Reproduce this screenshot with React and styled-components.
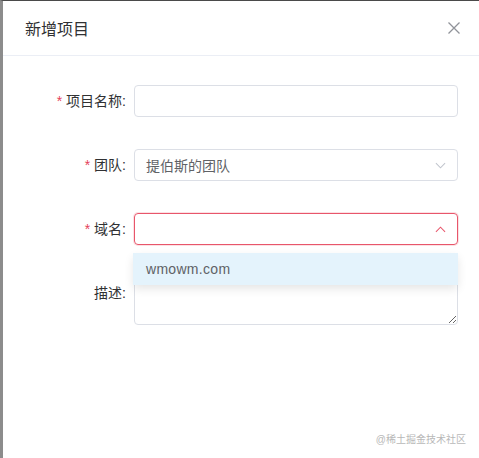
import React from "react";
import styled, { createGlobalStyle } from "styled-components";

const GlobalStyle = createGlobalStyle`
  html, body {
    margin: 0;
    padding: 0;
    background: #fff;
  }
  body {
    font-family: "Liberation Sans", "Noto Sans CJK SC", sans-serif;
    color: #606266;
  }
`;

const Frame = styled.div`
  width: 479px;
  height: 458px;
  box-sizing: border-box;
  border-top: 1px solid #4a4a4a;
  border-left: 3px solid #8c8c8c;
  background: #fff;
  position: relative;
  overflow: hidden;
`;

const Header = styled.div`
  height: 54px;
  display: flex;
  align-items: center;
  justify-content: space-between;
  padding: 0 19px 0 22px;
  border-bottom: 1px solid #ebeef5;
`;

const Title = styled.span`
  font-size: 16px;
  color: #303133;
`;

const Close = styled.svg`
  width: 12px;
  height: 12px;
  display: block;
`;

const Body = styled.div`
  padding: 29px 21px 0 0;
  display: flex;
  flex-direction: column;
  gap: 32px;
`;

const Row = styled.div`
  display: grid;
  grid-template-columns: 131px 1fr;
  align-items: start;
  position: relative;
`;

const Label = styled.label`
  height: 32px;
  line-height: 32px;
  font-size: 14px;
  color: #303133;
  text-align: right;
  padding-right: 8px;
  white-space: nowrap;
`;

const Star = styled.span`
  color: #e5415a;
  margin-right: 4px;
`;

const Field = styled.div`
  height: 32px;
  box-sizing: border-box;
  border: 1px solid ${(p) => (p.$error ? "#e8566b" : "#dcdfe6")};
  box-shadow: ${(p) => (p.$error ? "0 0 0 1px rgba(232, 86, 107, 0.18)" : "none")};
  border-radius: 4px;
  display: flex;
  align-items: center;
  justify-content: space-between;
  padding: 0 11px;
  font-size: 14px;
  color: #606266;
`;

const Chevron = styled.svg`
  width: 11px;
  height: 11px;
  display: block;
`;

const Area = styled.textarea`
  height: 48px;
  box-sizing: border-box;
  border: 1px solid #dcdfe6;
  border-radius: 4px;
  resize: vertical;
  outline: none;
  font: inherit;
  display: block;
  width: 100%;
  margin: 0;
`;

const Menu = styled.ul`
  position: absolute;
  left: 130px;
  right: 0;
  top: 40px;
  margin: 0;
  padding: 0;
  list-style: none;
  background: #fff;
  border-radius: 4px;
  box-shadow: 0 4px 10px rgba(0, 0, 0, 0.1);
  z-index: 2;
`;

const Option = styled.li`
  height: 32px;
  line-height: 32px;
  padding-left: 13px;
  font-size: 14px;
  color: #606266;
  background: #e4f3fc;
  letter-spacing: 0.3px;
`;

const Watermark = styled.div`
  position: absolute;
  right: 13px;
  bottom: 12px;
  font-size: 10px;
  color: #b8b8b8;
`;

const ChevronIcon = ({ up, color }) => (
  <Chevron viewBox="0 0 12 12">
    <path
      d={up ? "M1 8.5 L6 3.5 L11 8.5" : "M1 3.5 L6 8.5 L11 3.5"}
      fill="none"
      stroke={color}
      strokeWidth="1.1"
    />
  </Chevron>
);

export default function App() {
  return (
    <>
      <GlobalStyle />
      <Frame>
        <Header>
          <Title>新增项目</Title>
          <Close viewBox="0 0 12 12">
            <path d="M0.5 0.5 L11.5 11.5 M11.5 0.5 L0.5 11.5" stroke="#909399" strokeWidth="1.3" />
          </Close>
        </Header>
        <Body>
          <Row>
            <Label><Star>*</Star>项目名称:</Label>
            <Field />
          </Row>
          <Row>
            <Label><Star>*</Star>团队:</Label>
            <Field>
              提伯斯的团队
              <ChevronIcon color="#c0c4cc" />
            </Field>
          </Row>
          <Row>
            <Label><Star>*</Star>域名:</Label>
            <Field $error>
              <span />
              <ChevronIcon up color="#e8566b" />
            </Field>
            <Menu>
              <Option>wmowm.com</Option>
            </Menu>
          </Row>
          <Row>
            <Label>描述:</Label>
            <Area />
          </Row>
        </Body>
        <Watermark>@稀土掘金技术社区</Watermark>
      </Frame>
    </>
  );
}
